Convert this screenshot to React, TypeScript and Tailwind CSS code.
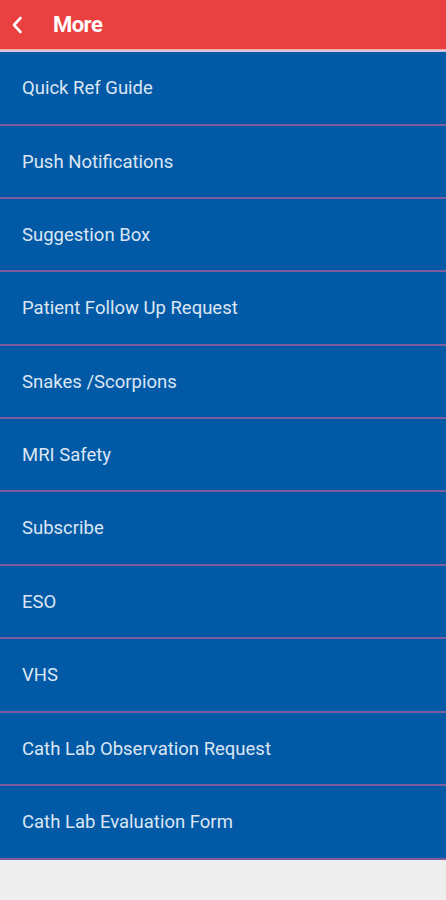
import React from 'react';

const items = [
  { label: 'Quick Ref Guide', h: 'h-[74px]' },
  { label: 'Push Notifications', h: 'h-[73px]' },
  { label: 'Suggestion Box', h: 'h-[73px]' },
  { label: 'Patient Follow Up Request', h: 'h-[74px]' },
  { label: 'Snakes /Scorpions', h: 'h-[73px]' },
  { label: 'MRI Safety', h: 'h-[73px]' },
  { label: 'Subscribe', h: 'h-[74px]' },
  { label: 'ESO', h: 'h-[73px]' },
  { label: 'VHS', h: 'h-[74px]' },
  { label: 'Cath Lab Observation Request', h: 'h-[73px]' },
  { label: 'Cath Lab Evaluation Form', h: 'h-[74px]' },
];

export default function App() {
  return (
    <div className="w-[446px] h-[900px] bg-[#eeeeee] font-['Roboto',sans-serif] overflow-hidden">
      {/* Top bar */}
      <div className="h-[49px] bg-[#ea4040] flex items-center">
        <button className="w-[34px] h-[49px] flex items-center justify-center text-white">
          <svg width="12" height="18" viewBox="0 0 12 18" fill="none">
            <path d="M9.5 2 L3 9 L9.5 16" stroke="white" strokeWidth="2.6" strokeLinecap="round" strokeLinejoin="round" />
          </svg>
        </button>
        <h1 className="ml-[19px] text-white text-[22px] font-bold tracking-tight">More</h1>
      </div>
      <div className="h-[1px] bg-[#f2a8a8]" />
      <div className="h-[2px] bg-[#d9c6dc]" />

      {/* Menu list */}
      <div className="flex flex-col">
        {items.map((item) => (
          <div
            key={item.label}
            className={`${item.h} bg-[#0259a6] border-b-2 border-[#7f5c9f] flex items-center pl-[22px] pt-[2px]`}
          >
            <span className="text-[#dbe6f3] text-[18.5px]">{item.label}</span>
          </div>
        ))}
      </div>
    </div>
  );
}
